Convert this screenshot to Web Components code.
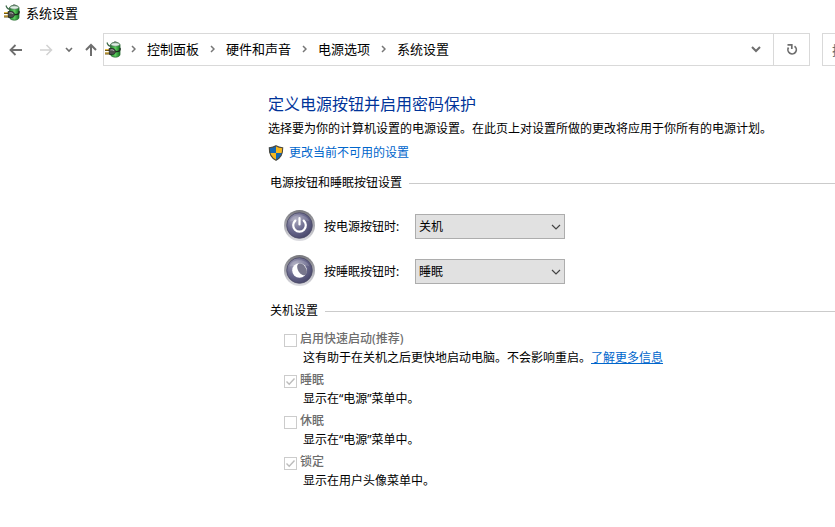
<!DOCTYPE html>
<html lang="zh-CN">
<head>
<meta charset="utf-8">
<title>系统设置</title>
<style>
  body { margin: 0; background: #fff; color: #000; font: 12px/20px "Noto Sans", "Noto Sans CJK SC", sans-serif; overflow-x: hidden; }
</style>
</head>
<body>
<system-window></system-window>

<script>
const define = (name, html, setup) => {
  const template = document.createElement('template');
  template.innerHTML = html;
  customElements.define(name, class extends HTMLElement {
    constructor() {
      super();
      this.attachShadow({ mode: 'open' }).append(template.content.cloneNode(true));
    }
    connectedCallback() { if (setup) setup(this, this.shadowRoot); }
  });
};

define('power-plug-icon', `
  <style>:host { display: block; flex: none; width: 17px; height: 18px; } svg { display: block; }</style>
  <svg width="17" height="18" viewBox="0 0 17 18" aria-hidden="true">
    <defs><linearGradient id="cell" x2="1" y2="0"><stop offset="0" stop-color="#1d7a2b"/><stop offset=".5" stop-color="#5fd061"/><stop offset="1" stop-color="#14741f"/></linearGradient></defs>
    <path d="M5.500 4C5.500 .500 15 .500 15 4V13.500C15 17 6 17 5.500 13.500Z" fill="url(#cell)" stroke="#2c6b35" stroke-width=".8"/>
    <path d="M5.800 3.800C6 1.200 14.600 1.200 14.700 3.800C14 5.600 7 5.600 5.800 3.800Z" fill="#dfeee4" stroke="#60756a" stroke-width=".6"/>
    <path d="M8.500 1.500C8.500 .500 12 .500 12 1.500" fill="none" stroke="#4c5a55" stroke-width=".8"/>
    <path d="M2 1.500C2.500 3.500 4 5.300 6.500 5.500" fill="none" stroke="#3f6a4a" stroke-width="1.200"/>
    <path d="M0 9H5M0 12.500H5" stroke="#6a5518" stroke-width="1.800"/>
    <path d="M0 8.500H4M0 12H4" stroke="#e6bb45" stroke-width="1"/>
    <path d="M4 7.500H7.500C9.500 7.500 10.500 9 10.500 10.500S9.500 13.500 7.500 13.500H4.500Z" fill="#4b4d4b" stroke="#1d221e" stroke-width=".7"/>
    <path d="M5.500 9C7 8.600 8.500 9 9 10" stroke="#b9bdba" fill="none"/>
    <path d="M10.500 10.500C14.500 11 15.500 9 15 7" stroke="#1c2b20" stroke-width="1.400" fill="none"/>
  </svg>`);

define('title-bar', `
  <style>
    :host { display: flex; align-items: center; gap: 5px; height: 26px; padding-left: 4px; }
    h1 { margin: 0; font-size: 13px; font-weight: 400; }
  </style>
  <power-plug-icon></power-plug-icon><h1><slot></slot></h1>`);

define('nav-bar', `
  <style>
    :host { display: flex; align-items: stretch; height: 33px; margin-top: 7px; overflow: hidden; font-size: 13px; }
    button { display: grid; place-items: center; border: 0; padding: 0; background: none; color: #6e6e6e; }
    svg { display: block; fill: none; stroke: currentColor; }
    .history { display: grid; grid-template-columns: 32px 28px 18px 25px; flex: none; }
    .history button:disabled { color: #d2d2d2; }
    .address { display: flex; flex: 1; min-width: 0; box-sizing: border-box; border: 1px solid #d9d9d9; padding-left: 1px; align-items: stretch; }
    power-plug-icon { align-self: center; }
    ol { display: flex; flex: 1; align-items: center; margin: 0; padding: 0 0 2px; list-style: none; white-space: nowrap; }
    li { display: flex; align-items: center; }
    li svg { margin: 0 11px; color: #777; }
    li:first-child svg { margin-left: 9px; }
    a { color: #000; text-decoration: none; }
    .drop { width: 34px; }
    .refresh { width: 36px; border-left: 1px solid #d9d9d9; }
    .search { flex: 0 0 200px; min-width: 0; box-sizing: border-box; margin: 0 -187px 0 12px; border: 1px solid #d9d9d9; border-radius: 0; padding: 0 0 0 9px; font: inherit; }
    .search::placeholder { color: #6d6d6d; opacity: 1; }
  </style>
  <div class="history">
    <button aria-label="后退"><svg width="14" height="12" viewBox="0 0 14 12" stroke-width="1.800"><path d="M13 6H1.500M6.500 1L1.500 6L6.500 11"/></svg></button>
    <button aria-label="前进" disabled><svg width="14" height="12" viewBox="0 0 14 12" stroke-width="1.500"><path d="M1 6H12.500M7.500 1L12.500 6L7.500 11"/></svg></button>
    <button aria-label="最近浏览的位置"><svg width="8" height="6" viewBox="0 0 8 6" stroke-width="1.600"><path d="M1 1L4 4L7 1"/></svg></button>
    <button aria-label="向上"><svg width="12" height="14" viewBox="0 0 12 14" stroke-width="2"><path d="M6 13V2M1 7L6 2L11 7"/></svg></button>
  </div>
  <div class="address">
    <power-plug-icon></power-plug-icon>
    <ol></ol>
    <button class="drop" aria-label="展开"><svg width="10" height="7" viewBox="0 0 10 7" stroke-width="2"><path d="M1 1L5 5L9 1"/></svg></button>
    <button class="refresh" aria-label="刷新"><svg width="12" height="13" viewBox="0 0 12 13" stroke-width="1.700"><path d="M8.500 3.200A4.200 4.200 0 1 1 2.500 4.500M1.500 1.800H5.800V6"/></svg></button>
  </div>
  <input class="search" type="search" placeholder="搜索控制面板" aria-label="搜索控制面板">`,
  (host, root) => {
    root.querySelector('ol').innerHTML = host.getAttribute('path').split('/').map(part =>
      `<li><svg width="5" height="8" viewBox="0 0 5 8" stroke-width="1.500"><path d="M1 1L4 4L1 7"/></svg><a href="#">${part}</a></li>`).join('');
  });

define('shield-link', `
  <style>
    :host { display: flex; align-items: center; gap: 5px; height: 24px; }
    a { color: #0066cc; text-decoration: none; }
    svg { display: block; flex: none; }
  </style>
  <svg width="16" height="16" viewBox="0 0 16 16" aria-hidden="true">
    <defs><clipPath id="shield"><path d="M8 .500C10 2 12.500 2.500 15 2.500C15.200 8.500 13 13 8 15.500C3 13 .800 8.500 1 2.500C3.500 2.500 6 2 8 .500Z"/></clipPath></defs>
    <g clip-path="url(#shield)"><path d="M0 0H8V8H0Z" fill="#1467b3"/><path d="M8 0H16V8H8Z" fill="#f8b91f"/><path d="M0 8H8V16H0Z" fill="#f8b91f"/><path d="M8 8H16V16H8Z" fill="#1467b3"/></g>
    <path d="M8 .800C10 2.200 12.500 2.700 14.700 2.700C14.900 8.500 12.700 12.800 8 15.200C3.300 12.800 1.100 8.500 1.300 2.700C3.500 2.700 6 2.200 8 .800Z" fill="none" stroke="#4b4a43" stroke-width="1.100"/>
  </svg>
  <a href="#"><slot></slot></a>`);

define('settings-group', `
  <style>
    :host { display: block; }
    header { display: flex; align-items: center; gap: 7px; padding-left: 2px; }
    header::after { content: ""; flex: 1; height: 1px; background: #cbcbcb; }
    h3 { margin: 0; font-size: 12px; font-weight: 400; }
    .body { display: grid; padding-left: 16px; }
  </style>
  <header><h3></h3></header>
  <div class="body"><slot></slot></div>`,
  (host, root) => { root.querySelector('h3').textContent = host.getAttribute('heading'); });

define('round-icon', `
  <style>
    :host { display: block; width: 32px; height: 33px; }
    svg { display: block; }
    .moon, :host([kind="sleep"]) .power { display: none; }
    :host([kind="sleep"]) .moon { display: block; }
  </style>
  <svg width="32" height="33" viewBox="0 0 32 33" aria-hidden="true">
    <defs>
      <linearGradient id="rim" x2="0" y2="1"><stop offset="0" stop-color="#77777c"/><stop offset=".5" stop-color="#a9a9b0"/><stop offset="1" stop-color="#dedee3"/></linearGradient>
      <radialGradient id="face" cx=".35" cy=".3" r=".8"><stop offset="0" stop-color="#a9a8bd"/><stop offset=".5" stop-color="#6b6a8e"/><stop offset="1" stop-color="#434266"/></radialGradient>
    </defs>
    <circle cx="15.500" cy="15.500" r="15.500" fill="url(#rim)"/>
    <circle cx="15.500" cy="15.500" r="12.800" fill="url(#face)" stroke="#4b4a66" stroke-width=".8"/>
    <path d="M5.500 11.500C7.500 3 23.500 3 25.500 11.500C19.500 9.500 12.500 10.500 5.500 11.500Z" fill="#fff" opacity=".16"/>
    <g class="power" fill="none" stroke="#fff" stroke-width="2.200" stroke-linecap="round"><path d="M11.300 10.600A6.300 6.300 0 1 0 19.700 10.600"/><path d="M15.500 8V14.500"/></g>
    <g class="moon"><circle cx="15.500" cy="15.500" r="7.300" fill="#fff"/><ellipse cx="18" cy="14.300" rx="4" ry="6.600" transform="rotate(-32 18 14.300)" fill="#77768c"/></g>
  </svg>`);

define('action-row', `
  <style>
    :host { display: grid; grid-template-columns: 32px 83px 150px; column-gap: 8px; align-items: center; }
    .pick { display: grid; align-items: center; }
    select, .pick svg { grid-area: 1 / 1; }
    select { appearance: none; width: 100%; height: 25px; box-sizing: border-box; border: 1px solid #adadad; border-radius: 0; padding: 0 20px 0 3px; background: #e1e1e1; color: #000; font: inherit; }
    .pick svg { justify-self: end; margin-right: 4px; pointer-events: none; fill: none; stroke: #444; }
  </style>
  <round-icon></round-icon>
  <label for="action"></label>
  <div class="pick"><select id="action"></select><svg width="10" height="6" viewBox="0 0 10 6" stroke-width="1.200"><path d="M1 1L5 5L9 1"/></svg></div>`,
  (host, root) => {
    root.querySelector('round-icon').setAttribute('kind', host.getAttribute('kind'));
    root.querySelector('label').textContent = host.getAttribute('label');
    root.querySelector('select').add(new Option(host.getAttribute('value')));
  });

define('check-option', `
  <style>
    :host { display: block; }
    .line { display: flex; align-items: center; gap: 3px; height: 18px; }
    .box { display: grid; flex: none; margin-top: 3px; }
    input, .box svg { grid-area: 1 / 1; }
    input { appearance: none; width: 13px; height: 13px; margin: 0; box-sizing: border-box; border: 1px solid #ccc; background: #fff; }
    .box svg { display: none; fill: none; stroke: #bcbcbc; pointer-events: none; }
    input:checked + svg { display: block; }
    label { color: #6d6d6d; font-weight: 500; }
    p { margin: 0; padding-left: 19px; line-height: 19px; }
  </style>
  <div class="line">
    <span class="box"><input type="checkbox" id="option" disabled><svg width="13" height="13" viewBox="0 0 13 13" stroke-width="1.400"><path d="M2.500 6.500L5.200 9.200L10.500 3.500"/></svg></span>
    <label for="option"></label>
  </div>
  <p><slot></slot></p>`,
  (host, root) => {
    root.querySelector('label').textContent = host.getAttribute('label');
    root.querySelector('input').checked = host.hasAttribute('checked');
  });

define('power-settings', `
  <style>
    :host { display: block; padding: 25px 0 24px 268px; }
    h2 { margin: 0; color: #003399; font-size: 16px; font-weight: 400; line-height: 26px; }
    .intro { margin: 0; line-height: 24px; }
    .actions { margin-top: 8px; }
    .rows { display: grid; gap: 12px; padding: 17px 0 13px; }
    .options { display: grid; gap: 4px; padding-top: 9px; }
    a { color: #0066cc; }
  </style>
  <h2>定义电源按钮并启用密码保护</h2>
  <p class="intro">选择要为你的计算机设置的电源设置。在此页上对设置所做的更改将应用于你所有的电源计划。</p>
  <shield-link>更改当前不可用的设置</shield-link>
  <settings-group class="actions" heading="电源按钮和睡眠按钮设置">
    <div class="rows">
      <action-row kind="power" label="按电源按钮时:" value="关机"></action-row>
      <action-row kind="sleep" label="按睡眠按钮时:" value="睡眠"></action-row>
    </div>
  </settings-group>
  <settings-group heading="关机设置">
    <div class="options">
      <check-option label="启用快速启动(推荐)">这有助于在关机之后更快地启动电脑。不会影响重启。<a href="#">了解更多信息</a></check-option>
      <check-option label="睡眠" checked>显示在“电源”菜单中。</check-option>
      <check-option label="休眠">显示在“电源”菜单中。</check-option>
      <check-option label="锁定" checked>显示在用户头像菜单中。</check-option>
    </div>
  </settings-group>`);

define('system-window', `
  <style>:host { display: block; }</style>
  <title-bar>系统设置</title-bar>
  <nav-bar path="控制面板/硬件和声音/电源选项/系统设置"></nav-bar>
  <main><power-settings></power-settings></main>`);
</script>
</body>
</html>
